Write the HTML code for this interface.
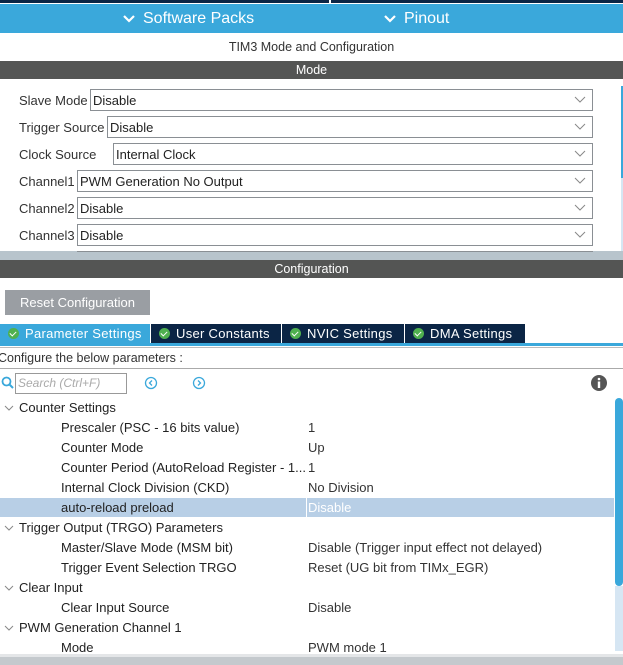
<!DOCTYPE html>
<html><head><style>
*{margin:0;padding:0;box-sizing:border-box}
body{width:623px;height:665px;overflow:hidden;background:#fff;font-family:"Liberation Sans",sans-serif;position:relative;color:#222}
.a{position:absolute;white-space:nowrap}
.sel{position:absolute;height:22px;border:1px solid #8a8f94;background:#fff;font-size:13px;line-height:21px;padding-left:2px;color:#222}
.sel svg{position:absolute;right:6px;top:6px}
.lbl{position:absolute;left:19px;font-size:13px;line-height:21px;color:#333}
.tab{position:absolute;top:324px;height:19px;background:#0b2545;color:#fff;font-size:13px;line-height:19px;letter-spacing:0.3px}
.tab i{display:inline-block;width:11px;height:11px;border-radius:50%;background:#4fb04f;vertical-align:-1px;margin:0 6px 0 8px;position:relative}
.tab i:after{content:"";position:absolute;left:3px;top:2px;width:3px;height:5px;border:solid #fff;border-width:0 1.5px 1.5px 0;transform:rotate(45deg)}
.r{position:absolute;font-size:13px;line-height:21px;height:20px;color:#222}
</style></head><body>
<div class="a" style="left:0;top:0;width:623px;height:3px;background:#0b2545"></div>
<div class="a" style="left:329px;top:0;width:2px;height:3px;background:#fff"></div>
<div class="a" style="left:0;top:3px;width:623px;height:30px;background:#3aa8db"></div>
<div class="a" style="left:0;top:3px;width:623px;height:1px;background:#fff"></div>
<svg class="a" style="left:122px;top:14px" width="14" height="10"><path d="M2 2 L7 7 L12 2" stroke="#fff" stroke-width="2.2" fill="none"/></svg>
<div class="a" style="left:143px;top:10px;color:#fff;font-size:16px">Software Packs</div>
<svg class="a" style="left:383px;top:14px" width="14" height="10"><path d="M2 2 L7 7 L12 2" stroke="#fff" stroke-width="2.2" fill="none"/></svg>
<div class="a" style="left:404px;top:10px;color:#fff;font-size:16px">Pinout</div>
<div class="a" style="left:0;top:40px;width:623px;text-align:center;font-size:12.5px;color:#333">TIM3 Mode and Configuration</div>
<div class="a" style="left:0;top:61px;width:623px;height:18px;background:#545554;color:#fff;text-align:center;font-size:12.5px;line-height:19px">Mode</div>

<div class="lbl" style="top:90px">Slave Mode</div><div class="sel" style="left:90px;top:89px;width:503px">Disable<svg width="12" height="8"><path d="M1 1L6 6L11 1" stroke="#888" fill="none"/></svg></div>
<div class="lbl" style="top:117px">Trigger Source</div><div class="sel" style="left:107px;top:116px;width:486px">Disable<svg width="12" height="8"><path d="M1 1L6 6L11 1" stroke="#888" fill="none"/></svg></div>
<div class="lbl" style="top:144px">Clock Source</div><div class="sel" style="left:113px;top:143px;width:480px">Internal Clock<svg width="12" height="8"><path d="M1 1L6 6L11 1" stroke="#888" fill="none"/></svg></div>
<div class="lbl" style="top:171px">Channel1</div><div class="sel" style="left:77px;top:170px;width:516px">PWM Generation No Output<svg width="12" height="8"><path d="M1 1L6 6L11 1" stroke="#888" fill="none"/></svg></div>
<div class="lbl" style="top:198px">Channel2</div><div class="sel" style="left:77px;top:197px;width:516px">Disable<svg width="12" height="8"><path d="M1 1L6 6L11 1" stroke="#888" fill="none"/></svg></div>
<div class="lbl" style="top:225px">Channel3</div><div class="sel" style="left:77px;top:224px;width:516px">Disable<svg width="12" height="8"><path d="M1 1L6 6L11 1" stroke="#888" fill="none"/></svg></div>
<div class="a" style="left:621px;top:86px;width:2px;height:92px;background:#3aa8db"></div>
<div class="a" style="left:621px;top:178px;width:2px;height:73px;background:#d6e6f3"></div>
<div class="a" style="left:0;top:251px;width:623px;height:9px;background:#b8c4cc"></div>
<div class="a" style="left:77px;top:251px;width:516px;height:1px;background:#8a8f94"></div>
<div class="a" style="left:0;top:260px;width:623px;height:18px;background:#545554;color:#fff;text-align:center;font-size:12.5px;line-height:19px">Configuration</div>

<div class="a" style="left:5px;top:290px;width:145px;height:25px;background:#9a9ea3;color:#fff;font-size:13px;line-height:25px;text-align:center">Reset Configuration</div>

<div class="tab" style="left:0;width:150px;background:#3aa8db"><i></i>Parameter Settings</div>
<div class="tab" style="left:151px;width:130px"><i></i>User Constants</div>
<div class="tab" style="left:282px;width:122px"><i></i>NVIC Settings</div>
<div class="tab" style="left:405px;width:120px"><i></i>DMA Settings</div>
<div class="a" style="left:0;top:343px;width:623px;height:3px;background:#3aa8db"></div>
<div class="a" style="left:0;top:347px;width:623px;height:1px;background:#bbb"></div>
<div class="a" style="left:-2px;top:351px;font-size:12.5px;color:#333">Configure the below parameters :</div>
<div class="a" style="left:0;top:368px;width:623px;height:1px;background:#aaa"></div>
<svg class="a" style="left:1px;top:376px" width="14" height="14"><circle cx="5.5" cy="5.5" r="4" stroke="#3aa8db" stroke-width="1.8" fill="none"/><path d="M8.5 8.5L12 12" stroke="#3aa8db" stroke-width="2"/></svg>
<div class="a" style="left:15px;top:373px;width:112px;height:21px;border:1px solid #999;font-size:12px;font-style:italic;color:#aaa;line-height:19px;padding-left:2px">Search (Ctrl+F)</div>
<svg class="a" style="left:144px;top:376px" width="14" height="14"><circle cx="7" cy="7" r="5.5" stroke="#3aa8db" stroke-width="1.3" fill="none"/><path d="M8 4.5L5.5 7L8 9.5" stroke="#3aa8db" stroke-width="1.3" fill="none"/></svg>
<svg class="a" style="left:192px;top:376px" width="14" height="14"><circle cx="7" cy="7" r="5.5" stroke="#3aa8db" stroke-width="1.3" fill="none"/><path d="M6 4.5L8.5 7L6 9.5" stroke="#3aa8db" stroke-width="1.3" fill="none"/></svg>
<svg class="a" style="left:591px;top:375px" width="16" height="16"><circle cx="8" cy="8" r="8" fill="#555"/><rect x="6.8" y="6.5" width="2.4" height="6.5" fill="#fff"/><circle cx="8" cy="4" r="1.3" fill="#fff"/></svg>

<div class="a" style="left:0;top:498px;width:614px;height:19px;background:#b8cfe6"></div>
<div class="a" style="left:306px;top:498px;width:1px;height:19px;background:#fff"></div>
<div class="a" style="left:615px;top:398px;width:8px;height:188px;background:#3aa8db;border-radius:4px"></div>
<div class="a" style="left:615px;top:586px;width:8px;height:65px;background:#d6e6f3"></div>

<svg class="a" style="left:4px;top:404px" width="10" height="8"><path d="M1 2L5 6L9 2" stroke="#888" fill="none"/></svg><div class="r" style="left:19px;top:397px">Counter Settings</div>
<div class="r" style="left:61px;top:417px">Prescaler (PSC - 16 bits value)</div><div class="r" style="left:308px;top:417px;color:#333">1</div>
<div class="r" style="left:61px;top:437px">Counter Mode</div><div class="r" style="left:308px;top:437px;color:#333">Up</div>
<div class="r" style="left:61px;top:457px">Counter Period (AutoReload Register - 1...</div><div class="r" style="left:308px;top:457px;color:#333">1</div>
<div class="r" style="left:61px;top:477px">Internal Clock Division (CKD)</div><div class="r" style="left:308px;top:477px;color:#333">No Division</div>
<div class="r" style="left:61px;top:497px">auto-reload preload</div><div class="r" style="left:308px;top:497px;color:#fff">Disable</div>
<svg class="a" style="left:4px;top:524px" width="10" height="8"><path d="M1 2L5 6L9 2" stroke="#888" fill="none"/></svg><div class="r" style="left:19px;top:517px">Trigger Output (TRGO) Parameters</div>
<div class="r" style="left:61px;top:537px">Master/Slave Mode (MSM bit)</div><div class="r" style="left:308px;top:537px;color:#333">Disable (Trigger input effect not delayed)</div>
<div class="r" style="left:61px;top:557px">Trigger Event Selection TRGO</div><div class="r" style="left:308px;top:557px;color:#333">Reset (UG bit from TIMx_EGR)</div>
<svg class="a" style="left:4px;top:584px" width="10" height="8"><path d="M1 2L5 6L9 2" stroke="#888" fill="none"/></svg><div class="r" style="left:19px;top:577px">Clear Input</div>
<div class="r" style="left:61px;top:597px">Clear Input Source</div><div class="r" style="left:308px;top:597px;color:#333">Disable</div>
<svg class="a" style="left:4px;top:624px" width="10" height="8"><path d="M1 2L5 6L9 2" stroke="#888" fill="none"/></svg><div class="r" style="left:19px;top:617px">PWM Generation Channel 1</div>
<div class="r" style="left:61px;top:637px">Mode</div><div class="r" style="left:308px;top:637px;color:#333">PWM mode 1</div>
<div class="a" style="left:0;top:654px;width:623px;height:3px;background:#e4e6e8"></div>
<div class="a" style="left:0;top:657px;width:623px;height:8px;background:#c4c9cd"></div>
</body></html>
